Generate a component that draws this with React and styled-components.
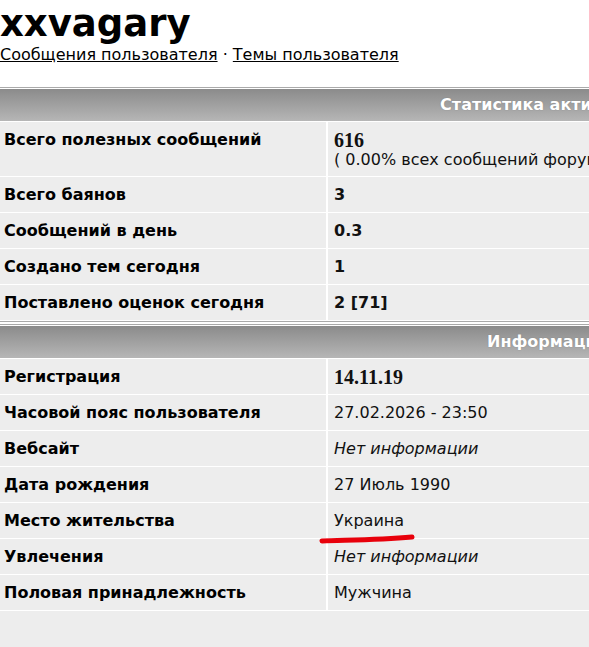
import styled, { createGlobalStyle } from "styled-components";

const Global = createGlobalStyle`
  html, body {
    margin: 0;
    padding: 0;
    background: #fff;
    overflow: hidden;
  }
  body {
    font-family: "DejaVu Sans", Verdana, sans-serif;
    color: #000;
  }
`;

const Page = styled.div`
  width: 1094px;
  position: relative;
`;

const Title = styled.h1`
  margin: 0;
  padding-top: 3px;
  font-size: 37px;
  line-height: 42px;
  font-weight: bold;
`;

const Links = styled.div`
  font-size: 16px;
  line-height: 20px;
  padding-bottom: 22px;
  a {
    color: #000;
    text-decoration: underline;
  }
`;

const Section = styled.div`
  border-top: 1px solid #aaa;
  padding-top: 1px;
  background: #fff;
  & + & {
    margin-top: 4px;
    box-shadow: 0 -2px 0 #fff, 0 -3px 0 #aaa;
  }
`;

const HeaderBar = styled.div`
  height: 32px;
  line-height: 32px;
  text-align: center;
  font-size: 16px;
  font-weight: bold;
  color: #fff;
  text-shadow: 0 0 1px #777;
  background: linear-gradient(#8b8b8b, #b6b6b6);
  border-bottom: 1px solid #fff;
`;

const Grid = styled.div`
  display: grid;
  grid-template-columns: 326px 1fr;
  column-gap: 2px;
  row-gap: 1px;
  background: #fff;
`;

const Cell = styled.div`
  background: #ededed;
  padding: ${(p) => (p.$tall ? "8px 4px 7px" : "0 4px")};
  min-height: ${(p) => (p.$tall ? "36px" : "35px")};
  display: flex;
  flex-direction: column;
  justify-content: ${(p) => (p.$top ? "flex-start" : "center")};
  font-size: 16px;
  line-height: 18px;
  box-sizing: border-box;
`;

const Label = styled(Cell)`
  font-weight: bold;
`;

const Value = styled(Cell)`
  padding-left: 6px;
  color: #111;
  font-weight: ${(p) => (p.$bold ? "bold" : "normal")};
  font-style: ${(p) => (p.$italic ? "italic" : "normal")};
`;

const Num = styled.b`
  font-family: "Liberation Serif", "Times New Roman", serif;
  font-size: 20px;
  line-height: 20px;
  font-weight: bold;
`;

const Filler = styled.div`
  height: 40px;
  background: #ededed;
  margin-top: 1px;
`;

const Mark = styled.svg`
  position: absolute;
  left: 318px;
  top: 533px;
  pointer-events: none;
`;

const stats = [
  ["Всего баянов", "3"],
  ["Сообщений в день", "0.3"],
  ["Создано тем сегодня", "1"],
  ["Поставлено оценок сегодня", "2 [71]"],
];

const info = [
  ["Часовой пояс пользователя", "27.02.2026 - 23:50"],
  ["Вебсайт", "Нет информации", true],
  ["Дата рождения", "27 Июль 1990"],
  ["Место жительства", "Украина"],
  ["Увлечения", "Нет информации", true],
  ["Половая принадлежность", "Мужчина"],
];

export default function App() {
  return (
    <Page>
      <Global />
      <Title>xxvagary</Title>
      <Links>
        <a href="#">Сообщения пользователя</a> · <a href="#">Темы пользователя</a>
      </Links>

      <Section>
        <HeaderBar>Статистика активности</HeaderBar>
        <Grid>
          <Label $tall $top>
            <div style={{ paddingTop: 1 }}>Всего полезных сообщений</div>
          </Label>
          <Value $tall $top>
            <div><Num>616</Num></div>
            <div>( 0.00% всех сообщений форума )</div>
          </Value>
          {stats.map(([k, v]) => (
            <>
              <Label key={k}>{k}</Label>
              <Value $bold>{v}</Value>
            </>
          ))}
        </Grid>
      </Section>

      <Section>
        <HeaderBar>Информация</HeaderBar>
        <Grid>
          <Label>Регистрация</Label>
          <Value>
            <Num>14.11.19</Num>
          </Value>
          {info.map(([k, v, it]) => (
            <>
              <Label key={k}>{k}</Label>
              <Value $italic={it}>{v}</Value>
            </>
          ))}
        </Grid>
        <Filler />
      </Section>

      <Mark width="100" height="12" viewBox="0 0 100 12">
        <path
          d="M4 8 C 30 7, 60 7, 94 4"
          stroke="#e8000b"
          strokeWidth="5"
          strokeLinecap="round"
          fill="none"
        />
      </Mark>
    </Page>
  );
}
